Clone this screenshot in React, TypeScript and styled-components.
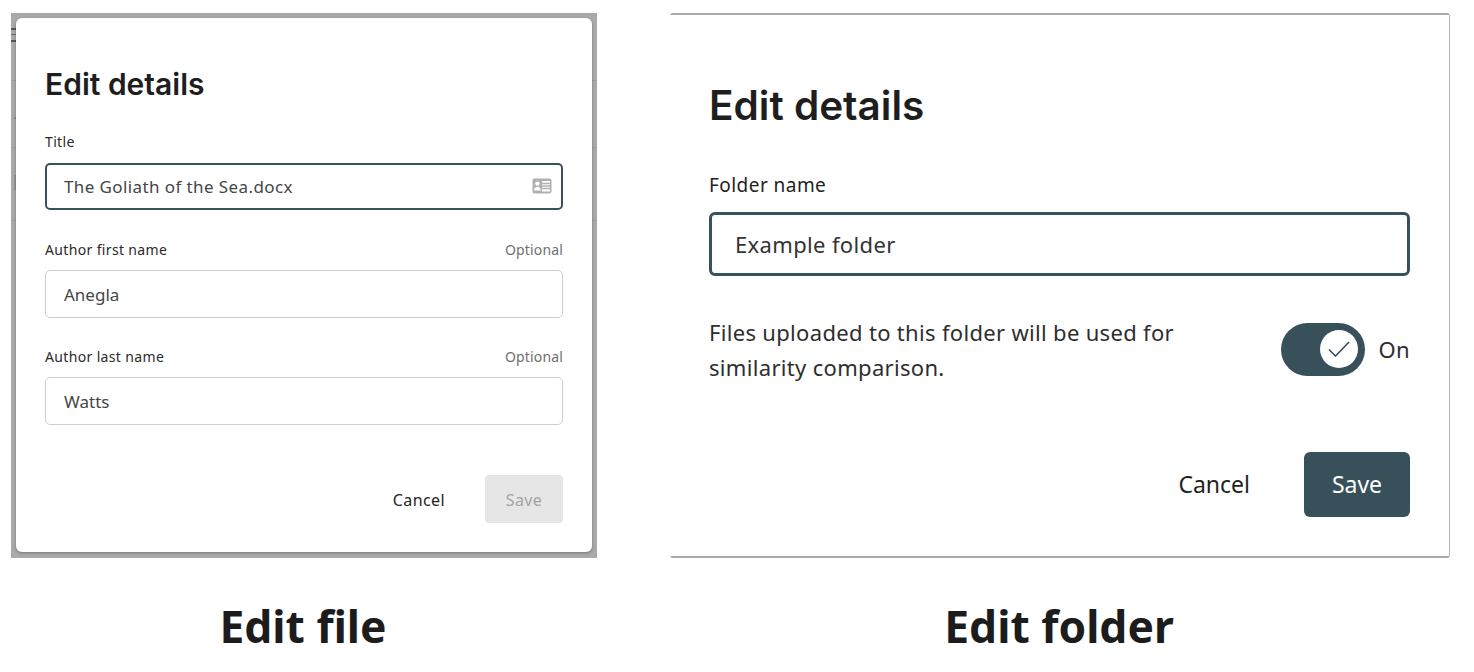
import React from 'react'
import styled, { createGlobalStyle } from 'styled-components'

const GlobalStyle = createGlobalStyle`
  html, body {
    margin: 0;
    padding: 0;
    background: #ffffff;
  }
  body {
    font-family: 'Noto Sans', 'Open Sans', sans-serif;
    color: #1f1f1f;
  }
`

const Page = styled.div`
  width: 1474px;
  height: 672px;
  padding: 13px 24px 0 11px;
  box-sizing: border-box;
  display: grid;
  grid-template-columns: 586px 780px;
  column-gap: 73px;
  grid-template-rows: 545px auto;
  overflow: hidden;
`

/* gray strip around the left card is the dimmed page behind the dialog */
const FileFrame = styled.div`
  background-color: #a9a9a9;
  background-image:
    linear-gradient(#9d9d9d, #9d9d9d),
    linear-gradient(#9d9d9d, #9d9d9d),
    linear-gradient(#9d9d9d, #9d9d9d),
    linear-gradient(#8a8a8a, #8a8a8a),
    linear-gradient(#959595, #959595),
    linear-gradient(#555555, #555555),
    linear-gradient(#666666, #666666),
    linear-gradient(#555555, #555555);
  background-size: 100% 1px, 100% 1px, 100% 1px, 2px 2px, 2px 15px, 5px 2px, 5px 1px, 5px 2px;
  background-position: 0 67px, 0 134px, 0 207px, 3px 104px, 3px 162px, 0 15px, 0 21px, 0 27px;
  background-repeat: no-repeat;
  padding: 5px 5px 6px 5px;
  box-sizing: border-box;
  display: flex;
`

const FolderFrame = styled.div`
  border-top: 2px solid #a9a9a9;
  border-bottom: 2px solid #a9a9a9;
  border-right: 1px solid #b5b5b5;
  border-radius: 3px;
  box-sizing: border-box;
  height: 545px;
  display: flex;
`

const FileCard = styled.div`
  flex: 1;
  background: #ffffff;
  border-radius: 6px;
  box-shadow: 0 1px 3px rgba(0, 0, 0, 0.3);
  padding: 48px 29px 0;
  display: flex;
  flex-direction: column;
`

const FolderCard = styled.div`
  flex: 1;
  background: #ffffff;
  padding: 66px 39px 0;
  display: flex;
  flex-direction: column;
`

const Heading = styled.h2<{ $size: number }>`
  margin: 0;
  font-family: 'Inter', 'Lato', sans-serif;
  font-weight: 600;
  font-size: ${(p) => p.$size}px;
  line-height: 1.25;
  color: #1e1e1e;
`

const LabelRow = styled.div<{ $top: number }>`
  display: flex;
  justify-content: space-between;
  align-items: center;
  margin-top: ${(p) => p.$top}px;
  height: 20px;
  margin-bottom: 10px;
`

const Label = styled.span`
  font-size: 14px;
  letter-spacing: 0.35px;
  color: #2a2a2a;
`

const Optional = styled.span`
  font-size: 14px;
  letter-spacing: 0.15px;
  color: #6f6f6f;
`

const InputBox = styled.div<{ $focused?: boolean }>`
  height: ${(p) => (p.$focused ? 47 : 48)}px;
  margin-top: ${(p) => (p.$focused ? 1 : 0)}px;
  box-sizing: border-box;
  border: ${(p) => (p.$focused ? '2px solid #38525c' : '1px solid #cfcfcf')};
  border-radius: 5px;
  padding: ${(p) => (p.$focused ? '0 9px 0 17px' : '2px 18px 0')};
  display: flex;
  align-items: center;
  justify-content: space-between;
  font-size: 17px;
  letter-spacing: ${(p) => (p.$focused ? 0.4 : 0)}px;
  color: #464646;
`

const Actions = styled.div`
  display: flex;
  justify-content: flex-end;
  align-items: center;
  margin-top: 50px;
`

const CancelButton = styled.button`
  border: none;
  background: none;
  padding: 2px 0 0;
  font-family: inherit;
  font-size: 16px;
  letter-spacing: 0.4px;
  color: #262626;
  margin-right: 40px;
`

const DisabledSave = styled.button`
  border: none;
  width: 78px;
  height: 48px;
  padding: 2px 0 0;
  border-radius: 4px;
  background: #e6e6e6;
  color: #a3a3a3;
  font-family: inherit;
  font-size: 16px;
  letter-spacing: 0.4px;
`

const FolderLabel = styled.div`
  font-size: 19px;
  letter-spacing: 0.45px;
  line-height: 24px;
  color: #222222;
  margin-top: 41px;
  margin-bottom: 15px;
`

const FolderInput = styled.div`
  height: 64px;
  box-sizing: border-box;
  border: 3px solid #38525c;
  border-radius: 6px;
  padding: 0 23px;
  display: flex;
  align-items: center;
  font-size: 22px;
  letter-spacing: 0.35px;
  color: #333333;
`

const ToggleRow = styled.div`
  display: flex;
  justify-content: space-between;
  align-items: center;
  margin-top: 38px;
`

const Description = styled.p`
  margin: 1px 0 0;
  width: 520px;
  font-size: 22px;
  letter-spacing: 0.32px;
  line-height: 35px;
  color: #2e2e2e;
`

const ToggleGroup = styled.div`
  display: flex;
  align-items: center;
  gap: 14px;
`

const Track = styled.div`
  width: 84px;
  height: 53px;
  border-radius: 27px;
  background: #38505a;
  display: flex;
  align-items: center;
  justify-content: flex-end;
  padding-right: 7px;
  box-sizing: border-box;
`

const Knob = styled.div`
  width: 38px;
  height: 38px;
  border-radius: 50%;
  background: #ffffff;
  display: flex;
  align-items: center;
  justify-content: center;
`

const ToggleText = styled.span`
  font-size: 22px;
  letter-spacing: 0.3px;
  margin-bottom: 1px;
  color: #2e2e2e;
`

const FolderActions = styled.div`
  display: flex;
  justify-content: flex-end;
  align-items: center;
  margin-top: 67px;
`

const FolderCancel = styled.button`
  border: none;
  background: none;
  padding: 0;
  font-family: inherit;
  font-size: 23px;
  color: #1f1f1f;
  margin-right: 54px;
`

const FolderSave = styled.button`
  border: none;
  width: 106px;
  height: 65px;
  padding: 0;
  border-radius: 6px;
  background: #38505a;
  color: #ffffff;
  font-family: inherit;
  font-size: 23px;
`

const Caption = styled.div`
  text-align: center;
  font-size: 44.4px;
  font-weight: 700;
  line-height: 60px;
  color: #1c1c1c;
  padding-top: 38px;
  margin-left: -2px;
`

const IdCardIcon = () => (
  <svg width="20" height="16" viewBox="0 0 20 16" fill="none">
    <rect x="0.5" y="0.5" width="19" height="15" rx="2" fill="#b0b0b0" />
    <rect x="10" y="3" width="8" height="10.5" fill="#ffffff" />
    <path d="M10 5.5h8M10 8h8M10 10.5h8" stroke="#b0b0b0" strokeWidth="1.4" />
    <circle cx="5.4" cy="5.6" r="2.2" fill="#ffffff" />
    <path d="M2 12.5c0-2.5 1.5-3.8 3.4-3.8s3.4 1.3 3.4 3.8z" fill="#ffffff" />
  </svg>
)

const CheckIcon = () => (
  <svg width="22" height="16" viewBox="0 0 22 16" fill="none">
    <path d="M1 8.5l6.5 6.5L21 1" stroke="#38505a" strokeWidth="1.6" />
  </svg>
)

export default function App() {
  return (
    <>
      <GlobalStyle />
      <Page>
        <FileFrame>
          <FileCard>
            <Heading $size={30}>Edit details</Heading>
            <LabelRow $top={28}>
              <Label>Title</Label>
            </LabelRow>
            <InputBox $focused>
              The Goliath of the Sea.docx
              <IdCardIcon />
            </InputBox>
            <LabelRow $top={30}>
              <Label>Author first name</Label>
              <Optional>Optional</Optional>
            </LabelRow>
            <InputBox>Anegla</InputBox>
            <LabelRow $top={29}>
              <Label>Author last name</Label>
              <Optional>Optional</Optional>
            </LabelRow>
            <InputBox>Watts</InputBox>
            <Actions>
              <CancelButton>Cancel</CancelButton>
              <DisabledSave>Save</DisabledSave>
            </Actions>
          </FileCard>
        </FileFrame>
        <FolderFrame>
          <FolderCard>
            <Heading $size={40.5}>Edit details</Heading>
            <FolderLabel>Folder name</FolderLabel>
            <FolderInput>Example folder</FolderInput>
            <ToggleRow>
              <Description>
                Files uploaded to this folder will be used for similarity comparison.
              </Description>
              <ToggleGroup>
                <Track>
                  <Knob>
                    <CheckIcon />
                  </Knob>
                </Track>
                <ToggleText>On</ToggleText>
              </ToggleGroup>
            </ToggleRow>
            <FolderActions>
              <FolderCancel>Cancel</FolderCancel>
              <FolderSave>Save</FolderSave>
            </FolderActions>
          </FolderCard>
        </FolderFrame>
        <Caption>Edit file</Caption>
        <Caption>Edit folder</Caption>
      </Page>
    </>
  )
}
